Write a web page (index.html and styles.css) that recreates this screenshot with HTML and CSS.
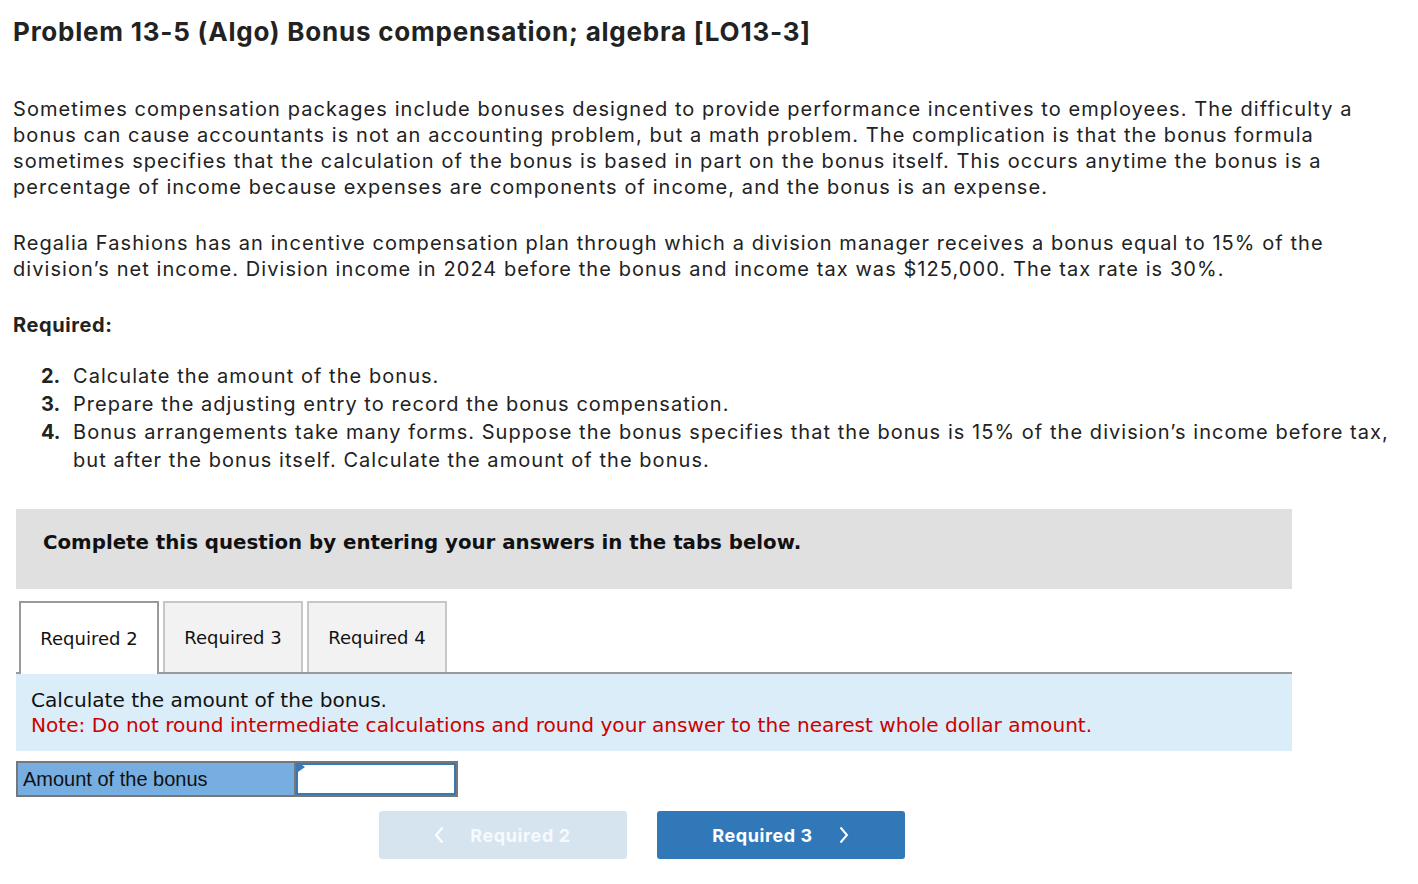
FILE: index.html
```html
<!DOCTYPE html>
<html>
<head>
<meta charset="utf-8">
<link rel="stylesheet" href="styles.css">
</head>
<body>
<div class="page">
  <h1 class="title">Problem 13-5 (Algo) Bonus compensation; algebra [LO13-3]</h1>
  <p class="para p1">Sometimes compensation packages include bonuses designed to provide performance incentives to employees. The difficulty a bonus can cause accountants is not an accounting problem, but a math problem. The complication is that the bonus formula sometimes specifies that the calculation of the bonus is based in part on the bonus itself. This occurs anytime the bonus is a percentage of income because expenses are components of income, and the bonus is an expense.</p>
  <p class="para p2">Regalia Fashions has an incentive compensation plan through which a division manager receives a bonus equal to 15% of the division’s net income. Division income in 2024 before the bonus and income tax was $125,000. The tax rate is 30%.</p>
  <p class="req">Required:</p>
  <ol class="list">
    <li><span class="num">2.</span><span>Calculate the amount of the bonus.</span></li>
    <li><span class="num">3.</span><span>Prepare the adjusting entry to record the bonus compensation.</span></li>
    <li><span class="num">4.</span><span>Bonus arrangements take many forms. Suppose the bonus specifies that the bonus is 15% of the division’s income before tax, but after the bonus itself. Calculate the amount of the bonus.</span></li>
  </ol>

  <div class="panel">
    <div class="banner">Complete this question by entering your answers in the tabs below.</div>
    <div class="tabs">
      <div class="tab active">Required 2</div>
      <div class="tab">Required 3</div>
      <div class="tab">Required 4</div>
    </div>
    <div class="info">
      <div>Calculate the amount of the bonus.</div>
      <div class="note">Note: Do not round intermediate calculations and round your answer to the nearest whole dollar amount.</div>
    </div>
    <div class="answer">
      <div class="label">Amount of the bonus</div>
      <div class="input"><span class="flag"></span></div>
    </div>
    <div class="nav">
      <button class="btn prev"><svg width="10" height="18" viewBox="0 0 10 18"><path d="M8.5 1.5 L2 9 L8.5 16.5" fill="none" stroke="#fff" stroke-width="2"/></svg><span>Required 2</span></button>
      <button class="btn next"><span>Required 3</span><svg width="10" height="18" viewBox="0 0 10 18"><path d="M1.5 1.5 L8 9 L1.5 16.5" fill="none" stroke="#fff" stroke-width="2"/></svg></button>
    </div>
  </div>
</div>
</body>
</html>
```
FILE: styles.css
```css
* { box-sizing: border-box; }
body {
  margin: 0;
  background: #fff;
  color: #222;
  font-family: Inter, "Open Sans", sans-serif;
}
.page {
  padding: 15px 13px 0 13px;
}
.title {
  margin: 0;
  font-size: 26px;
  font-weight: 700;
  line-height: 34px;
  letter-spacing: 0.78px;
  color: #222;
}
.para {
  margin: 0;
  font-size: 20px;
  line-height: 26px;
  letter-spacing: 1.07px;
  max-width: 1385px;
}
.p1 { margin-top: 47px; }
.p2 { margin-top: 30px; }
.req {
  margin: 30px 0 0 0;
  font-size: 20px;
  line-height: 26px;
  font-weight: 700;
  letter-spacing: 0.6px;
}
.list {
  list-style: none;
  margin: 24px 0 0 0;
  padding: 0 0 0 28px;
  font-size: 20px;
  line-height: 28px;
  letter-spacing: 1.05px;
}
.list li { display: flex; }
.num {
  width: 32px;
  flex: none;
  font-weight: 700;
  letter-spacing: 0;
}
.panel {
  margin-top: 35px;
  margin-left: 3px;
  width: 1276px;
  font-family: "DejaVu Sans", Verdana, sans-serif;
}
.banner {
  background: #e0e0e0;
  height: 80px;
  padding: 21px 27px;
  font-weight: 700;
  font-size: 19.8px;
  line-height: 26px;
  color: #111;
}
.tabs {
  display: flex;
  gap: 4px;
  margin-top: 12px;
  padding-left: 3px;
  border-bottom: 2px solid #999;
  height: 73px;
}
.tab {
  width: 140px;
  height: 71px;
  background: #f2f2f2;
  border: 2px solid #c6c6c6;
  border-bottom: none;
  display: flex;
  align-items: center;
  justify-content: center;
  font-size: 18px;
  color: #111;
}
.tab.active {
  background: #fff;
  border-color: #999;
  height: 73px;
  margin-bottom: -2px;
}
.info {
  background: #dbedf8;
  height: 77px;
  padding: 14px 15px 0 15px;
  font-size: 20.1px;
  line-height: 25px;
  color: #111;
}
.note { color: #c00; }
.answer {
  display: flex;
  margin-top: 10px;
  width: 442px;
  height: 36px;
  border: 2px solid #777;
  font-family: "Liberation Sans", Arial, sans-serif;
}
.label {
  width: 278px;
  background: #77aee2;
  border-right: 2px solid #777;
  padding: 0 5px;
  font-size: 20px;
  line-height: 32px;
  color: #111;
}
.input {
  flex: 1;
  position: relative;
  background: #fff;
  border: 2px solid #3a78b5;
}
.flag {
  position: absolute;
  left: 0;
  width: 0;
  height: 0;
  border-top: 5px solid transparent;
  border-bottom: 5px solid transparent;
  border-left: 7px solid #3a78b5;
  top: -3px;
}
.nav {
  display: flex;
  gap: 30px;
  justify-content: center;
  margin-top: 14px;
  padding-right: 25px;
}
.btn {
  width: 248px;
  height: 48px;
  border: none;
  border-radius: 3px;
  display: flex;
  align-items: center;
  justify-content: center;
  gap: 26px;
  font-family: Inter, "Open Sans", sans-serif;
  font-size: 18px;
  font-weight: 700;
  letter-spacing: 0.6px;
  color: #fff;
}
.prev { background: #d6e4ef; color: #f7fafc; }
.next { background: #3178b9; }
```
